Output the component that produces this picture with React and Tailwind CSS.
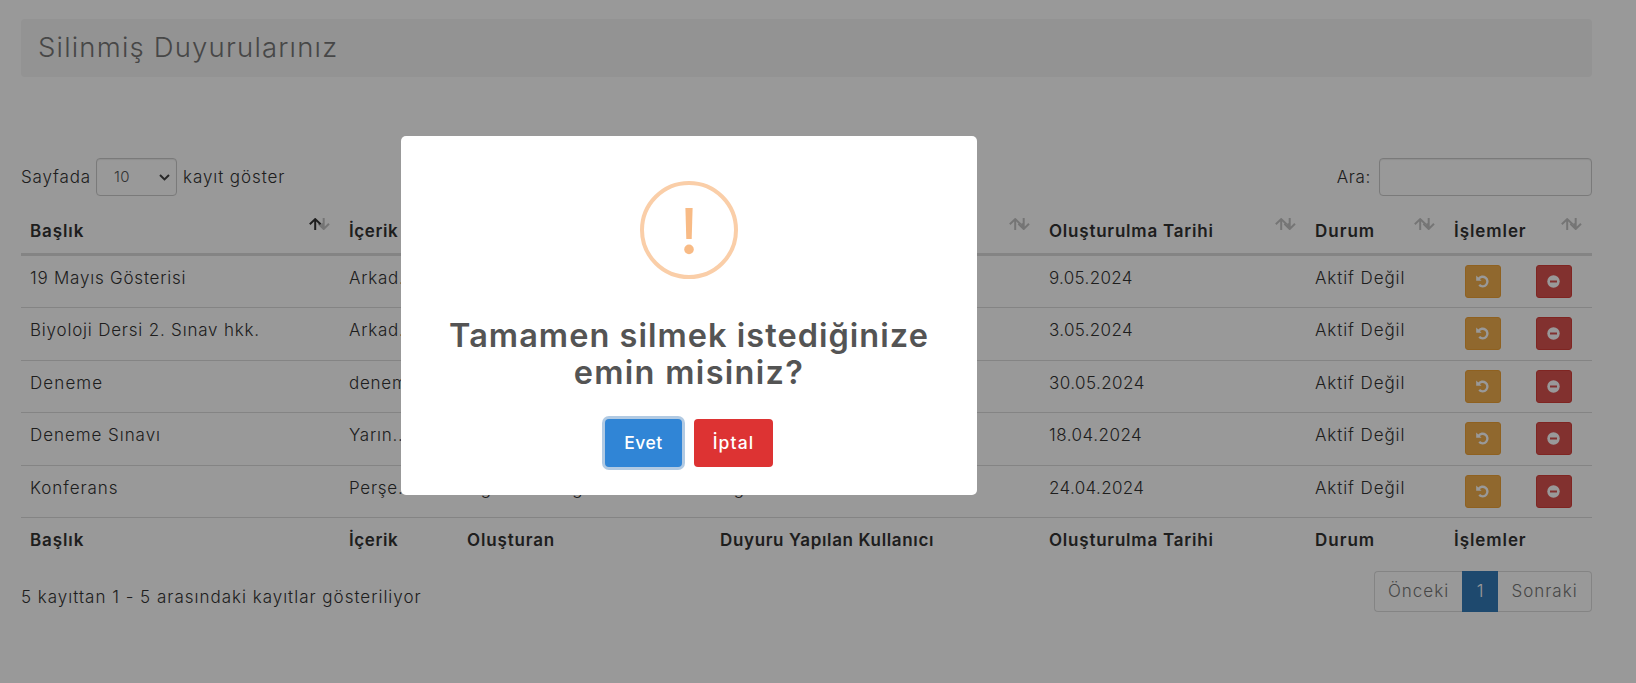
const COLS = "grid grid-cols-[319px_118px_253px_329px_266px_139px_147px]";

const HEADERS = [
  { label: "Başlık", cls: "tracking-[0.9px]", sorted: true },
  { label: "İçerik", cls: "tracking-[0.6px]" },
  { label: "Oluşturan", cls: "tracking-[0.85px]" },
  { label: "Duyuru Yapılan Kullanıcı", cls: "tracking-[0.65px]" },
  { label: "Oluşturulma Tarihi", cls: "tracking-[0.78px]" },
  { label: "Durum", cls: "tracking-[1px]" },
  { label: "İşlemler", cls: "tracking-[0.93px]" },
];

const ROWS = [
  { title: "19 Mayıs Gösterisi", cls: "tracking-[0.78px]", content: "Arkad...", date: "9.05.2024", dateCls: "tracking-[0.32px]", height: "h-[52px]" },
  { title: "Biyoloji Dersi 2. Sınav hkk.", cls: "tracking-[0.8px]", content: "Arkad...", date: "3.05.2024", dateCls: "tracking-[0.32px]", height: "h-[53px]" },
  { title: "Deneme", cls: "tracking-[1.1px]", content: "denem...", date: "30.05.2024", dateCls: "tracking-[0.43px]", height: "h-[52px]" },
  { title: "Deneme Sınavı", cls: "tracking-[0.95px]", content: "Yarın...", date: "18.04.2024", dateCls: "tracking-[0.5px]", height: "h-[53px]" },
  { title: "Konferans", cls: "tracking-[0.95px]", content: "Perşe...", author: "Öğretmen Öğretmen", target: "Öğrenci", date: "24.04.2024", dateCls: "tracking-[0.35px]", height: "h-[52px]" },
];

function SortIcon({ sorted }) {
  return (
    <svg className="mt-[9px] mr-2.5 h-3 w-[21px] shrink-0" viewBox="0 0 21 12" fill="none" strokeWidth="2">
      <path d="M12.4 5.6L15.1 8.9M14.7 0v11M9.4 5.8l5.3 5.2 5.3-5.2" stroke="#c4c4c4" />
      <path d="M6.2 12V1.2M.8 6.2l5.4-5.1 5.4 5.1" stroke={sorted ? "#333333" : "#c4c4c4"} />
    </svg>
  );
}

function UndoIcon() {
  return (
    <svg className="size-[13px]" viewBox="0 0 13 13" fill="none">
      <path d="M2.6 3.9A4.8 4.8 0 1 1 3.2 9.9" stroke="#fff" strokeWidth="2.4" />
      <path d="M.2.6v5.2h5.4z" fill="#fff" />
    </svg>
  );
}

function RemoveIcon() {
  return (
    <svg className="size-[13px]" viewBox="0 0 13 13">
      <circle cx="6.5" cy="6.5" r="6.2" fill="#fff" />
      <path d="M3 6.5h7" stroke="#d9534f" strokeWidth="2" />
    </svg>
  );
}

function HeaderRow({ footer }) {
  return (
    <div className={`${COLS} font-semibold ${footer ? "h-11" : "h-[47px] border-b-[3px] border-[#dddddd]"}`}>
      {HEADERS.map((h) => (
        <div key={h.label} className="flex justify-between">
          <span className={`pt-2.5 pl-[9px] whitespace-nowrap ${h.cls}`}>{h.label}</span>
          {!footer && <SortIcon sorted={h.sorted} />}
        </div>
      ))}
    </div>
  );
}

function DataRow({ row }) {
  return (
    <div className={`${COLS} ${row.height} border-b border-[#dddddd] [&>span]:pt-2.5 [&>span]:pl-[9px] [&>span]:whitespace-nowrap`}>
      <span className={row.cls}>{row.title}</span>
      <span className="tracking-[0.75px]">{row.content}</span>
      <span className="tracking-[0.9px]">{row.author}</span>
      <span className="tracking-[0.9px]">{row.target}</span>
      <span className={row.dateCls}>{row.date}</span>
      <span className="tracking-[0.9px]">Aktif Değil</span>
      <div className="flex gap-[35px] pt-[9px] pl-5">
        <button className="flex h-[33px] w-9 items-center justify-center rounded-[3px] border border-[#eea236] bg-[#f0ad4e] pr-0.5">
          <UndoIcon />
        </button>
        <button className="flex h-[33px] w-9 items-center justify-center rounded-[3px] border border-[#d43f3a] bg-[#d9534f] pr-px">
          <RemoveIcon />
        </button>
      </div>
    </div>
  );
}

function ConfirmDialog() {
  return (
    <div className="fixed inset-0 flex items-start justify-center bg-black/40 pt-[136px] pr-[258px]">
      <div role="dialog" className="flex h-[359px] w-[576px] flex-col items-center rounded-[5px] bg-white">
        <svg className="mt-[45px] size-[98px]" viewBox="0 0 98 98">
          <circle cx="49" cy="49" r="47" fill="none" stroke="#facea8" strokeWidth="4" />
          <path d="M45.4 27h7.2l-.9 31h-5.4z" fill="#f8bb86" />
          <circle cx="49" cy="68.4" r="4.8" fill="#f8bb86" />
        </svg>
        <h2 className="mt-[38px] flex flex-col items-center text-[32.5px] leading-[37px] font-semibold whitespace-nowrap text-[#545454]">
          <span className="tracking-[1.03px]">Tamamen silmek istediğinize</span>
          <span className="tracking-[1.3px]">emin misiniz?</span>
        </h2>
        <div className="mt-7 flex gap-3">
          <button className="h-12 w-[77px] rounded-[4px] bg-[#3085d6] text-[17.5px] font-medium tracking-[0.5px] text-white shadow-[0_0_0_3px_rgba(100,150,200,0.5)]">Evet</button>
          <button className="h-12 w-[79px] rounded-[4px] bg-[#dd3333] text-[17.5px] font-medium tracking-[1.1px] text-white">İptal</button>
        </div>
      </div>
    </div>
  );
}

export default function App() {
  return (
    <div className="h-[683px] overflow-hidden bg-white pt-[19px] pr-11 pl-[21px] font-['Inter','Noto_Sans',sans-serif] text-[17px] leading-6 font-light text-[#333333]">
      <h1 className="flex h-[58px] items-center rounded-[4px] bg-[#f5f5f5] pb-0.5 pl-[17px] text-[27.5px] tracking-[1.18px] text-[#777777]">
        Silinmiş Duyurularınız
      </h1>
      <div className="mt-[81px] flex h-[38px] items-center justify-between">
        <label className="flex items-center">
          <span className="w-[75px] tracking-[0.85px]">Sayfada</span>
          <span className="flex h-[38px] w-[81px] items-center justify-between rounded-[4px] border border-[#cccccc] pr-1.5 pl-[17px] text-[15px] tracking-[0.3px] text-[#555555] shadow-[inset_0_1px_1px_rgba(0,0,0,0.075)]">
            10
            <svg className="h-[7px] w-[11px]" viewBox="0 0 11 7" fill="none" stroke="#444444" strokeWidth="2">
              <path d="M1 1l4.5 4.4L10 1" />
            </svg>
          </span>
          <span className="ml-1.5 tracking-[0.92px]">kayıt göster</span>
        </label>
        <label className="flex items-center">
          <span className="tracking-[0.67px]">Ara:</span>
          <input className="ml-2 h-[38px] w-[213px] rounded-[4px] border border-[#cccccc] shadow-[inset_0_1px_1px_rgba(0,0,0,0.075)]" />
        </label>
      </div>
      <div className="mt-[13px]">
        <HeaderRow />
        {ROWS.map((row) => (
          <DataRow key={row.title} row={row} />
        ))}
        <HeaderRow footer />
      </div>
      <div className="mt-[9px] flex justify-between">
        <p className="pt-3.5 tracking-[0.99px]">5 kayıttan 1 - 5 arasındaki kayıtlar gösteriliyor</p>
        <nav className="flex h-[41px] text-[#777777] [&>span]:flex [&>span]:justify-center [&>span]:border-y [&>span]:pt-[7px]">
          <span className="w-[88px] rounded-l-[4px] border-l border-[#dddddd] tracking-[1px]">Önceki</span>
          <span className="w-9 border-[#337ab7] bg-[#337ab7] text-white">1</span>
          <span className="w-[94px] rounded-r-[4px] border-r border-[#dddddd] tracking-[1px]">Sonraki</span>
        </nav>
      </div>
      <ConfirmDialog />
    </div>
  );
}
